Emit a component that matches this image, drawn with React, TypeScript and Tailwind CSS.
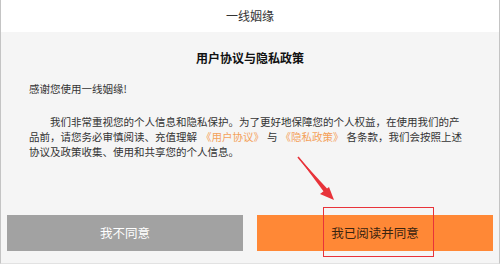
import React from "react";

export default function App() {
  const font = { fontFamily: '"Noto Sans CJK SC", "Noto Sans", sans-serif' };
  return (
    <div
      className="relative w-[500px] h-[264px] bg-[#f5f5f5] border-x border-b border-[#c4c4c4] border-b-[#e2e2e2] flex flex-col overflow-hidden"
      style={font}
    >
      <div className="h-8 bg-white flex items-center justify-center text-[12px] text-[#333] shrink-0">
        一线姻缘
      </div>
      <div className="flex flex-col px-[28px]">
        <div className="mt-[18px] text-center text-[12px] leading-4 font-bold text-[#111]">
          用户协议与隐私政策
        </div>
        <div className="mt-[15px] text-[10.5px] leading-[15px] text-[#333]">感谢您使用一线姻缘!</div>
        <p className="mt-[18px] w-[440px] text-[10.5px] leading-[15px] text-[#333] indent-[21px]">
          我们非常重视您的个人信息和隐私保护。为了更好地保障您的个人权益，在使用我们的产品前，请您务必审慎阅读、充值理解
          <span className="text-[#f4a15a] ml-[4px] mr-[3px]">《用户协议》</span>与
          <span className="text-[#f4a15a] ml-[3px] mr-[3px]">《隐私政策》</span>各条款，我们会按照上述协议及政策收集、使用和共享您的个人信息。
        </p>
      </div>
      <div className="mt-auto mb-[12px] flex gap-[14px] px-[6px]">
        <button className="flex-1 h-9 bg-[#a2a2a2] text-white text-[12.5px] flex items-center justify-center">
          我不同意
        </button>
        <button className="flex-1 h-9 bg-[#ff8836] text-[#3a2410] text-[12.5px] flex items-center justify-center">
          我已阅读并同意
        </button>
      </div>
      <div className="absolute left-[322px] top-[207px] w-[111px] h-[50px] border-[1.5px] border-[#e8333a]" />
      <svg className="absolute left-0 top-0" width="500" height="266" viewBox="0 0 500 266">
        <path d="M297 157 L327 193" stroke="#e8333a" strokeWidth="1.6" fill="none" />
        <path d="M297 157 L326.5 189 L323 192 Z" fill="#e8333a" />
        <polygon points="333,200 319,194 328,187" fill="#e8333a" />
      </svg>
    </div>
  );
}
